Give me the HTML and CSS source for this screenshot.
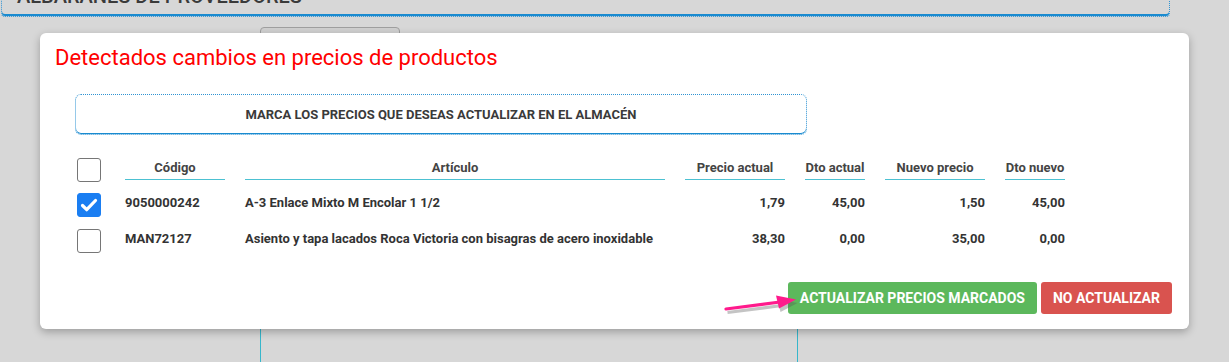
FILE: index.html
```html
<!DOCTYPE html>
<html lang="es">
<head>
<meta charset="utf-8">
<title>Albaranes de proveedores</title>
<link rel="stylesheet" href="styles.css">
</head>
<body>
<div class="page">
  <div class="top-panel"><h1 class="top-title">ALBARANES DE PROVEEDORES</h1></div>
  <div class="bg-area">
    <div class="bg-input"></div>
    <div class="bg-column"></div>
  </div>

  <div class="modal">
    <h2 class="modal-title">Detectados cambios en precios de productos</h2>
    <div class="notice">MARCA LOS PRECIOS QUE DESEAS ACTUALIZAR EN EL ALMACÉN</div>

    <div class="grid">
      <div class="cell-check"><span class="cb"></span></div>
      <div class="th center">Código</div>
      <div class="th center">Artículo</div>
      <div class="th center">Precio actual</div>
      <div class="th center">Dto actual</div>
      <div class="th center">Nuevo precio</div>
      <div class="th center">Dto nuevo</div>

      <div class="cell-check"><span class="cb checked"><svg viewBox="0 0 24 24" width="24" height="24"><path d="M5.5 12.5l4.2 4.2 8.8-9.2" fill="none" stroke="#fff" stroke-width="3.2" stroke-linecap="round" stroke-linejoin="round"/></svg></span></div>
      <div class="td">9050000242</div>
      <div class="td">A-3 Enlace Mixto M Encolar 1 1/2</div>
      <div class="td num">1,79</div>
      <div class="td num">45,00</div>
      <div class="td num">1,50</div>
      <div class="td num">45,00</div>

      <div class="cell-check"><span class="cb"></span></div>
      <div class="td">MAN72127</div>
      <div class="td">Asiento y tapa lacados Roca Victoria con bisagras de acero inoxidable</div>
      <div class="td num">38,30</div>
      <div class="td num">0,00</div>
      <div class="td num">35,00</div>
      <div class="td num">0,00</div>
    </div>

    <div class="actions">
      <button class="btn btn-green">ACTUALIZAR PRECIOS MARCADOS</button>
      <button class="btn btn-red">NO ACTUALIZAR</button>
    </div>
  </div>

  <svg class="arrow" width="90" height="30" viewBox="0 0 90 30">
    <g transform="translate(1.5,2.5)" opacity="0.35">
      <path d="M6 23 L60 16" stroke="#555" stroke-width="3.2" fill="none"/>
      <path d="M56 9.5 L76 13.5 L59 22.5 Z" fill="#555"/>
    </g>
    <path d="M6 22 L60 15" stroke="#ff1a8c" stroke-width="3.2" stroke-linecap="round" fill="none"/>
    <path d="M56 8.5 L76 12.5 L59 21.5 Z" fill="#ff1a8c"/>
  </svg>
</div>
</body>
</html>
```

FILE: styles.css
```css
* { box-sizing: border-box; }
html, body { margin: 0; padding: 0; }
body {
  background: #d7d7d7;
  font-family: Roboto, "Liberation Sans", Arial, sans-serif;
  color: #333;
}
.page {
  position: relative;
  width: 1229px;
  height: 362px;
  overflow: hidden;
}
.top-panel {
  margin-top: -30px;
  margin-left: 1px;
  width: 1169px;
  height: 47px;
  border: 1px dotted #2f93d3;
  border-radius: 0 0 4px 4px;
  box-shadow: inset 0 -2px 0 #1a8bd0;
  padding: 11px 0 0 15px;
}
.top-title {
  margin: 0;
  font-size: 20px;
  font-weight: 500;
  color: #3a3a3a;
  line-height: 28px;
}
.bg-area {
  padding-left: 260px;
  padding-top: 10px;
}
.bg-input {
  width: 140px;
  height: 30px;
  border: 1px solid #9f9f9f;
  border-radius: 4px;
  background: #d0d0d0;
}
.bg-column {
  width: 538px;
  height: 400px;
  border-left: 1px solid #36b6cb;
  border-right: 1px solid #36b6cb;
}

.modal {
  position: absolute;
  left: 40px;
  top: 33px;
  width: 1149px;
  height: 296px;
  background: #fff;
  border-radius: 6px;
  box-shadow: 0 3px 9px rgba(0,0,0,0.28);
  padding: 12px 17px 15px 15px;
  display: flex;
  flex-direction: column;
}
.modal-title {
  margin: 0;
  font-size: 22px;
  line-height: 26px;
  font-weight: 400;
  color: #ff0000;
}
.notice {
  margin: 23px 0 0 20px;
  width: 732px;
  height: 41px;
  border: 1px dotted #2f93d3;
  border-radius: 6px;
  box-shadow: inset 0 -1px 0 #1a8bd0;
  display: flex;
  align-items: center;
  justify-content: center;
  font-size: 13px;
  font-weight: 700;
  color: #3a3a3a;
}
.grid {
  margin: 23px 0 0 22px;
  display: grid;
  grid-template-columns: 28px 100px 420px 100px 60px 100px 60px;
  column-gap: 20px;
  row-gap: 11px;
  align-items: start;
  font-size: 13px;
  font-weight: 700;
}
.cell-check { height: 24px; }
.cb {
  display: block;
  width: 24px;
  height: 24px;
  border: 1px solid #767676;
  border-radius: 3px;
  background: #fff;
}
.cb.checked {
  background: #1a7ef2;
  border-color: #1a7ef2;
}
.cb.checked svg { display: block; margin: -1px; }
.th {
  padding: 2px 0 3px;
  line-height: 16px;
  border-bottom: 1px solid #4cc1d2;
  color: #444;
}
.center { text-align: center; }
.td {
  padding-top: 2px;
  line-height: 16px;
  color: #333;
  white-space: nowrap;
}
.num { text-align: right; }
.grid > :nth-child(n+15) { margin-top: 1px; }

.actions {
  margin-top: auto;
  display: flex;
  justify-content: flex-end;
  gap: 4px;
}
.btn {
  height: 32px;
  padding: 0 12px;
  border: none;
  border-radius: 3px;
  font-family: Roboto, "Liberation Sans", Arial, sans-serif;
  font-size: 14px;
  font-weight: 700;
  color: #fff;
  white-space: nowrap;
}
.btn-green { background: #5cb85c; }
.btn-red { background: #d9534f; }
.arrow {
  position: absolute;
  left: 720px;
  top: 287px;
}
```
